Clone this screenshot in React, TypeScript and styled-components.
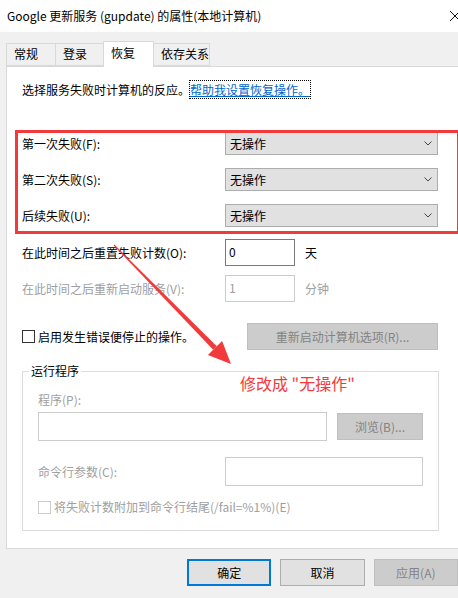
import React from "react";
import styled, { createGlobalStyle } from "styled-components";

const GlobalStyle = createGlobalStyle`
  html, body {
    margin: 0;
    padding: 0;
    background: #f0f0f0;
  }
  * {
    box-sizing: border-box;
  }
`;

type TabItem = {
  text: string;
  width: number;
  active?: boolean;
};

const tabs: TabItem[] = [
  { text: "常规", width: 50 },
  { text: "登录", width: 49 },
  { text: "恢复", width: 51, active: true },
  { text: "依存关系", width: 57 },
];

const failures = ["第一次失败(F):", "第二次失败(S):", "后续失败(U):"];

export default function App() {
  return (
    <Window>
      <GlobalStyle />
      <TitleBar>
        <span>Google 更新服务 (gupdate) 的属性(本地计算机)</span>
        <CloseIcon width="12" height="12" viewBox="0 0 12 12">
          <path d="M1 1 L11 11 M11 1 L1 11" stroke="#111" strokeWidth="1" />
        </CloseIcon>
      </TitleBar>

      <TabRow>
        {tabs.map((tab) => (
          <Tab key={tab.text} active={tab.active} $width={tab.width}>
            {tab.text}
          </Tab>
        ))}
      </TabRow>

      <Panel>
        <Intro>
          选择服务失败时计算机的反应。
          <HelpLink>帮助我设置恢复操作。</HelpLink>
        </Intro>

        <FailureList>
          {failures.map((label) => (
            <FieldRow key={label}>
              <span>{label}</span>
              <Select>
                <span>无操作</span>
                <svg width="8" height="5" viewBox="0 0 8 5">
                  <polyline points="0.5,0.5 4,4 7.5,0.5" fill="none" stroke="#444" strokeWidth="1" />
                </svg>
              </Select>
            </FieldRow>
          ))}
        </FailureList>

        <CounterRow>
          <span>在此时间之后重置失败计数(O):</span>
          <NumberBox>0</NumberBox>
          <span>天</span>
        </CounterRow>
        <CounterRow disabled>
          <span>在此时间之后重新启动服务(V):</span>
          <NumberBox disabled>1</NumberBox>
          <span>分钟</span>
        </CounterRow>

        <ActionRow>
          <CheckLabel>
            <CheckBox />
            <span>启用发生错误便停止的操作。</span>
          </CheckLabel>
          <DialogButton disabled $width={191}>
            重新启动计算机选项(R)...
          </DialogButton>
        </ActionRow>

        <GroupBox>
          <Legend>运行程序</Legend>
          <GrayLabel>程序(P):</GrayLabel>
          <ProgramRow>
            <TextBox $width={289} $height={29} />
            <DialogButton disabled $width={86}>
              浏览(B)...
            </DialogButton>
          </ProgramRow>
          <ArgsRow>
            <GrayLabel>命令行参数(C):</GrayLabel>
            <TextBox $width={198} $height={29} />
          </ArgsRow>
          <CheckLabel disabled>
            <CheckBox disabled />
            <span>将失败计数附加到命令行结尾(/fail=%1%)(E)</span>
          </CheckLabel>
        </GroupBox>
      </Panel>

      <ButtonBar>
        <DialogButton $width={86} primary>
          确定
        </DialogButton>
        <DialogButton $width={86}>取消</DialogButton>
        <DialogButton $width={86} disabled>
          应用(A)
        </DialogButton>
      </ButtonBar>

      <Annotation>修改成 "无操作"</Annotation>
      <ArrowLayer width="458" height="598" viewBox="0 0 458 598">
        <polygon points="114.4,244.6 113.6,245.4 213.2,349.8 216.8,346.2" fill="#f33a3a" />
        <polygon points="231,364 222.1,341 207.9,355" fill="#f33a3a" />
      </ArrowLayer>
    </Window>
  );
}

const Window = styled.div`
  position: relative;
  width: 458px;
  height: 598px;
  overflow: hidden;
  background: #f0f0f0;
  font-family: "Noto Sans CJK SC", "Noto Sans", sans-serif;
  font-size: 12px;
  line-height: 18px;
  color: #000;
`;

const TitleBar = styled.div`
  height: 32px;
  background: #fff;
  display: flex;
  align-items: center;
  justify-content: space-between;
  padding-left: 7px;
`;

const CloseIcon = styled.svg`
  margin-right: -3px;
`;

const TabRow = styled.div`
  height: 34px;
  display: flex;
  align-items: flex-end;
  padding-left: 6px;
`;

const Tab = styled.div<{ active?: boolean; $width: number }>`
  position: relative;
  z-index: ${(props) => (props.active ? 2 : 1)};
  width: ${(props) => props.$width}px;
  height: ${(props) => (props.active ? 26 : 23)}px;
  margin-left: -1px;
  margin-bottom: ${(props) => (props.active ? -1 : 0)}px;
  padding: ${(props) => (props.active ? "2px 0 0 7px" : "1px 0 0 7px")};
  border: 1px solid #d9d9d9;
  border-bottom: ${(props) => (props.active ? "none" : "1px solid #d9d9d9")};
  background: ${(props) => (props.active ? "#fff" : "#f0f0f0")};
  &:first-child {
    margin-left: 0;
  }
`;

const Panel = styled.div`
  width: 460px;
  height: 483px;
  margin-left: 6px;
  padding-left: 15px;
  background: #fff;
  border: 1px solid #d9d9d9;
`;

const Intro = styled.div`
  margin-top: 14px;
  white-space: nowrap;
`;

const HelpLink = styled.span`
  color: #0066cc;
  text-decoration: underline;
  outline: 1px dotted #000;
  outline-offset: 0;
`;

const FailureList = styled.div`
  position: relative;
  margin-top: 33px;
  display: flex;
  flex-direction: column;
  gap: 13px;
  &::after {
    content: "";
    position: absolute;
    top: -2px;
    left: -7px;
    width: 439px;
    bottom: -7px;
    border: 3px solid #f33a3a;
    pointer-events: none;
  }
`;

const FieldRow = styled.div`
  display: grid;
  grid-template-columns: 203px 213px;
  align-items: center;
  height: 23px;
`;

const Select = styled.div`
  height: 23px;
  display: flex;
  align-items: center;
  justify-content: space-between;
  padding: 0 5px 0 4px;
  background: #e1e1e1;
  border: 1px solid #adadad;
`;

const CounterRow = styled.div<{ disabled?: boolean }>`
  display: grid;
  grid-template-columns: 203px 80px auto;
  align-items: center;
  height: 27px;
  margin-top: 12px;
  color: ${(props) => (props.disabled ? "#a0a0a0" : "#000")};
  & + & {
    margin-top: 9px;
  }
`;

const NumberBox = styled.div<{ disabled?: boolean }>`
  width: 70px;
  height: 27px;
  padding: 3px 3px;
  background: #fff;
  border: 1px solid ${(props) => (props.disabled ? "#cccccc" : "#7a7a7a")};
  color: ${(props) => (props.disabled ? "#a0a0a0" : "#000")};
`;

const ActionRow = styled.div`
  display: grid;
  grid-template-columns: 225px 191px;
  align-items: center;
  margin-top: 21px;
`;

const CheckLabel = styled.label<{ disabled?: boolean }>`
  display: flex;
  align-items: center;
  gap: 3px;
  white-space: nowrap;
  color: ${(props) => (props.disabled ? "#a0a0a0" : "#000")};
`;

const CheckBox = styled.span<{ disabled?: boolean }>`
  width: 13px;
  height: 13px;
  background: #fff;
  border: 1px solid ${(props) => (props.disabled ? "#cccccc" : "#333")};
`;

const DialogButton = styled.div<{ $width: number; disabled?: boolean; primary?: boolean }>`
  width: ${(props) => props.$width}px;
  height: 27px;
  display: flex;
  align-items: center;
  justify-content: center;
  white-space: nowrap;
  background: ${(props) => (props.disabled ? "#cccccc" : "#e1e1e1")};
  color: ${(props) => (props.disabled ? "#838383" : "#000")};
  border: ${(props) =>
    props.primary
      ? "2px solid #0078d7"
      : props.disabled
      ? "1px solid #bfbfbf"
      : "1px solid #adadad"};
`;

const GroupBox = styled.fieldset`
  width: 417px;
  margin: 12px 0 0 0;
  padding: 0 0 14px 15px;
  border: 1px solid #dcdcdc;
  min-inline-size: 0;
`;

const Legend = styled.legend`
  margin-left: -9px;
  padding: 0 2px;
  line-height: 18px;
  color: #000;
`;

const GrayLabel = styled.div`
  color: #a0a0a0;
  margin-top: 11px;
`;

const ProgramRow = styled.div`
  display: flex;
  align-items: center;
  gap: 10px;
  margin-top: 3px;
`;

const TextBox = styled.div<{ $width: number; $height: number }>`
  width: ${(props) => props.$width}px;
  height: ${(props) => props.$height}px;
  background: #fff;
  border: 1px solid #cccccc;
`;

const ArgsRow = styled.div`
  display: grid;
  grid-template-columns: 187px 198px;
  align-items: center;
  margin-top: 16px;
  margin-bottom: 12px;
  ${GrayLabel} {
    margin-top: 0;
  }
`;

const ButtonBar = styled.div`
  display: flex;
  gap: 9px;
  padding-left: 187px;
  margin-top: 10px;
`;

const Annotation = styled.div`
  position: absolute;
  left: 240px;
  top: 372px;
  font-size: 16px;
  line-height: 22px;
  color: #f33a3a;
  white-space: nowrap;
`;

const ArrowLayer = styled.svg`
  position: absolute;
  left: 0;
  top: 0;
  pointer-events: none;
`;
